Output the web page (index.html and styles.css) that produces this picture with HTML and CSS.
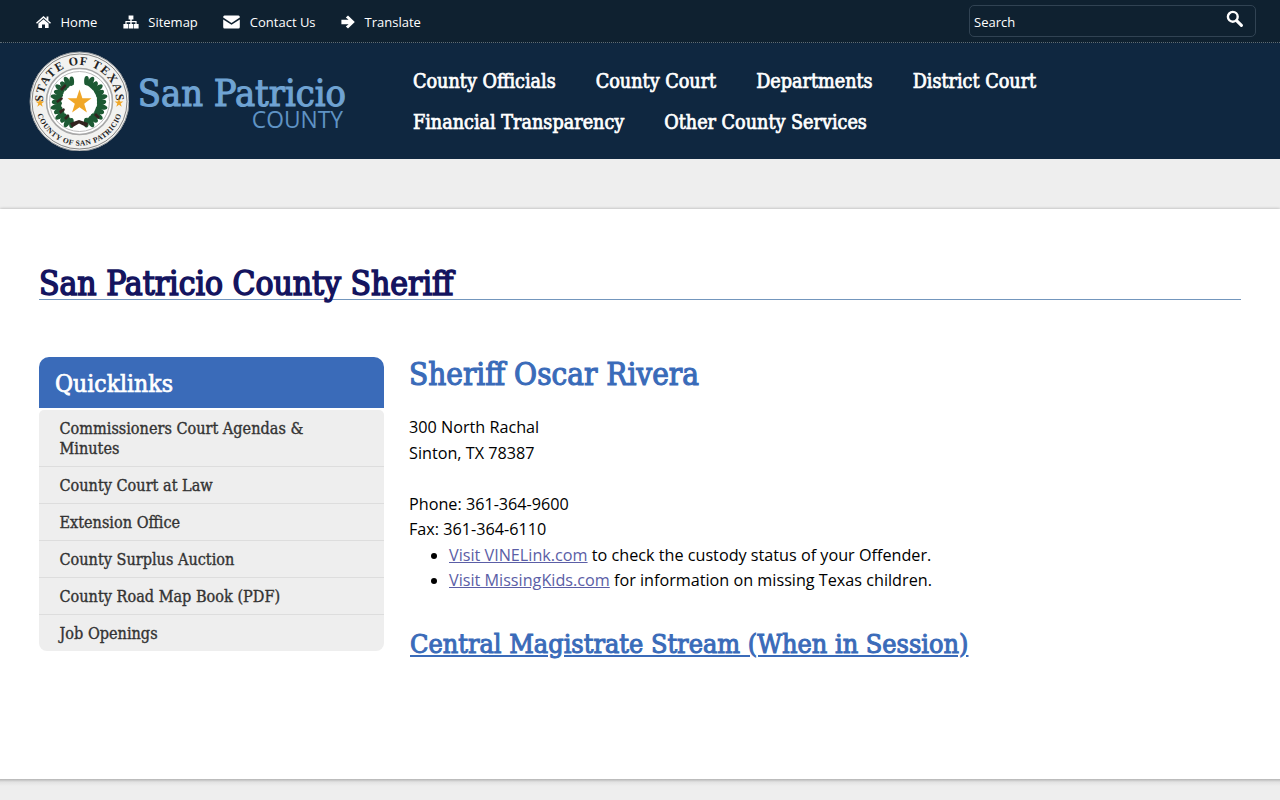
FILE: index.html
```html
<!DOCTYPE html>
<html lang="en">
<head>
  <meta charset="UTF-8">
  <meta name="viewport" content="width=device-width, initial-scale=1.0">
  <title>San Patricio County Sheriff</title>
  <link rel="stylesheet" href="styles.css">
</head>
<body>
  <div class="topbar">
    <ul class="toplinks">
      <li><a href="#">
        <svg class="icon" width="15" height="14" viewBox="0 0 15 14"><path d="M7.5 1 L10.6 3.8 V1.6 H12.4 V5.4 L15 7.8 L14 8.8 L7.5 3 L1 8.8 L0 7.8 Z M2.4 8.6 L7.5 4.2 L12.6 8.6 V13 H9 V9.6 H6 V13 H2.4 Z"/></svg>
        Home</a></li>
      <li><a href="#">
        <svg class="icon" width="16" height="14" viewBox="0 0 16 14"><path d="M5.6 0.5 H10.4 V4.5 H8.7 V6 H13.6 V9 H15.6 V13.5 H10.6 V9 H12.4 V7.2 H8.7 V9 H10 V13.5 H6 V9 H7.3 V7.2 H3.6 V9 H5.4 V13.5 H0.4 V9 H2.4 V6 H7.3 V4.5 H5.6 Z"/></svg>
        Sitemap</a></li>
      <li><a href="#">
        <svg class="icon" width="17" height="14" viewBox="0 0 17 14"><path d="M1.5 0.5 H15.5 Q16.8 0.5 16.8 2 V2.6 L8.5 8 L0.2 2.6 V2 Q0.2 0.5 1.5 0.5 Z M0.2 4.4 L8.5 9.8 L16.8 4.4 V12 Q16.8 13.5 15.5 13.5 H1.5 Q0.2 13.5 0.2 12 Z"/></svg>
        Contact Us</a></li>
      <li><a href="#">
        <svg class="icon" width="14" height="14" viewBox="0 0 14 14"><path d="M7 0.4 L13.8 7 L7 13.6 L4.8 11.6 L7.6 9.2 H0.4 V4.8 H7.6 L4.8 2.4 Z"/></svg>
        Translate</a></li>
    </ul>
    <div class="searchbox">
      <span>Search</span>
      <svg class="icon" width="17" height="17" viewBox="0 0 17 17"><circle cx="6.8" cy="6.8" r="4.9" fill="none" stroke="#fff" stroke-width="2.4"/><path d="M10.6 10.6 L15.4 15.4" stroke="#fff" stroke-width="3" stroke-linecap="round"/></svg>
    </div>
  </div>

  <header class="masthead">
    <a class="brand" href="#">
      <svg class="seal" width="100" height="100" viewBox="0 0 100 100">
        <defs>
          <path id="arc-top" d="M17.4 65.9 A36.5 36.5 0 1 1 83.6 65.9"/>
          <path id="arc-bottom" d="M9.15 35.5 A44 44 0 1 0 91.85 35.5"/>
          <g id="leaf-pair">
            <ellipse cx="46" cy="29" rx="2.4" ry="5" transform="rotate(-28 46 29)"/>
            <ellipse cx="54" cy="29.5" rx="2.4" ry="5" transform="rotate(28 54 29.5)"/>
            <ellipse cx="50" cy="27.5" rx="2.6" ry="5.5"/>
          </g>
        </defs>
        <circle cx="50.5" cy="50.5" r="49.5" fill="#f2f2f0" stroke="#8d9296"/>
        <circle cx="50.5" cy="50.5" r="47.5" fill="none" stroke="#3a3a3a" stroke-width="0.6"/>
        <circle cx="50.5" cy="50.5" r="33" fill="#fff" stroke="#a8a8a8" stroke-width="1.6"/>
        <circle cx="50.5" cy="50.5" r="30" fill="#fff" stroke="#bbb"/>
        <text class="seal-top"><textPath href="#arc-top" startOffset="50%" text-anchor="middle">STATE OF TEXAS</textPath></text>
        <text class="seal-bottom"><textPath href="#arc-bottom" startOffset="50%" text-anchor="middle">COUNTY OF SAN PATRICIO</textPath></text>
        <path class="seal-star" d="M11 47 L12 50.4 L15.4 50.4 L12.7 52.4 L13.7 55.8 L11 53.8 L8.3 55.8 L9.3 52.4 L6.6 50.4 L10 50.4 Z"/>
        <path class="seal-star" d="M90 47 L91 50.4 L94.4 50.4 L91.7 52.4 L92.7 55.8 L90 53.8 L87.3 55.8 L88.3 52.4 L85.6 50.4 L89 50.4 Z"/>
        <g class="seal-leaf">
          <use href="#leaf-pair" transform="rotate(30 50 51)"/>
          <use href="#leaf-pair" transform="rotate(54 50 51)"/>
          <use href="#leaf-pair" transform="rotate(78 50 51)"/>
          <use href="#leaf-pair" transform="rotate(102 50 51)"/>
          <use href="#leaf-pair" transform="rotate(126 50 51)"/>
          <use href="#leaf-pair" transform="rotate(150 50 51)"/>
          <use href="#leaf-pair" transform="rotate(-30 50 51)"/>
          <use href="#leaf-pair" transform="rotate(-54 50 51)"/>
          <use href="#leaf-pair" transform="rotate(-78 50 51)"/>
          <use href="#leaf-pair" transform="rotate(-102 50 51)"/>
          <use href="#leaf-pair" transform="rotate(-126 50 51)"/>
          <use href="#leaf-pair" transform="rotate(-150 50 51)"/>
        </g>
        <circle cx="50.5" cy="50.5" r="17.5" fill="#fff"/>
        <path class="seal-dark" d="M31 38 L36 33 L37.5 35 L33 40 Z M27 50 L33 46 L34 48 L28.5 52 Z M30 60 L35 57 L36 59 L31.5 63 Z M35 67 L39 63 L40.5 65 L37 69 Z M41 72 L50 69 L59 72 L57.5 76 L50 72.5 L43 76.5 Z M67 62 L71 66 L69 68 L65 64 Z"/>
        <path class="seal-star" d="M50.5 38.5 L53.4 47.2 L62.5 47.3 L55.2 52.7 L57.9 61.5 L50.5 56.2 L43.1 61.5 L45.8 52.7 L38.5 47.3 L47.6 47.2 Z"/>
      </svg>
      <span class="brand-text">
        <span class="brand-name">San Patricio</span>
        <span class="brand-sub">COUNTY</span>
      </span>
    </a>
    <nav class="mainnav">
      <a href="#">County Officials</a>
      <a href="#">County Court</a>
      <a href="#">Departments</a>
      <a href="#">District Court</a>
      <a href="#">Financial Transparency</a>
      <a href="#">Other County Services</a>
    </nav>
  </header>

  <div class="strip"></div>

  <main class="page">
    <h1 class="page-title"><span>San Patricio County Sheriff</span></h1>
    <div class="columns">
      <aside class="quicklinks">
        <h2>Quicklinks</h2>
        <ul>
          <li><a href="#">Commissioners Court Agendas &amp; Minutes</a></li>
          <li><a href="#">County Court at Law</a></li>
          <li><a href="#">Extension Office</a></li>
          <li><a href="#">County Surplus Auction</a></li>
          <li><a href="#">County Road Map Book (PDF)</a></li>
          <li><a href="#">Job Openings</a></li>
        </ul>
      </aside>
      <section class="content">
        <h2>Sheriff Oscar Rivera</h2>
        <p class="address">300 North Rachal<br>Sinton, TX 78387</p>
        <p class="phones">Phone: 361-364-9600<br>Fax: 361-364-6110</p>
        <ul>
          <li><a href="#">Visit VINELink.com</a> to check the custody status of your Offender.</li>
          <li><a href="#">Visit MissingKids.com</a> for information on missing Texas children.</li>
        </ul>
        <h3><a href="#">Central Magistrate Stream (When in Session)</a></h3>
      </section>
    </div>
  </main>
  <div class="pagefoot"></div>
</body>
</html>
```

FILE: styles.css
```css
body {
  margin: 0;
  background-color: #eee;
  font-family: "Open Sans", "Noto Sans", sans-serif;
  color: #000;
}

/* slab headings: DejaVu has no bold condensed, so the regular cut gets a stroke */
.brand-name,
.mainnav a,
.page-title,
.quicklinks h2,
.quicklinks li,
.content h2,
.content h3 {
  font-family: "DejaVu Serif", serif;
  font-stretch: condensed;
  font-weight: normal;
}

/* top bar */
.topbar {
  height: 42px;
  display: flex;
  justify-content: space-between;
  align-items: center;
  padding: 0 24px 0 36px;
  background-color: #0f2130;
  border-bottom: 1px dotted #5d6b75;
}
.toplinks {
  display: flex;
  gap: 25.5px;
  margin: 1px 0 0;
  padding: 0;
  list-style: none;
}
.toplinks a {
  display: flex;
  align-items: center;
  gap: 9.5px;
  color: #fff;
  font-size: 13px;
  text-decoration: none;
}
.icon {
  fill: #fff;
  flex: none;
}
.searchbox {
  width: 287px;
  height: 32px;
  display: flex;
  justify-content: space-between;
  padding: 0 12px 0 4px;
  box-sizing: border-box;
  align-items: center;
  border: 1px solid #314353;
  border-radius: 5px;
  color: #fff;
  font-size: 13px;
}
.searchbox span {
  margin-top: 2px;
}
.searchbox .icon {
  margin-top: -6px;
}

/* header */
.masthead {
  height: 116px;
  display: flex;
  background-color: #0f2740;
}
.brand {
  width: 413px;
  flex: none;
  display: flex;
  align-items: center;
  gap: 9px;
  padding-left: 29px;
  box-sizing: border-box;
  text-decoration: none;
}
.seal {
  flex: none;
}
.seal-top {
  font: bold 12px "Liberation Serif", serif;
  letter-spacing: 1.1px;
  fill: #222;
}
.seal-bottom {
  font: bold 7.6px "Liberation Serif", serif;
  letter-spacing: 0.5px;
  fill: #222;
}
.seal-star {
  fill: #f0a728;
}
.seal-leaf {
  fill: #1d5a34;
}
.seal-dark {
  fill: #33231f;
}
.brand-text {
  display: flex;
  flex-direction: column;
  align-items: flex-end;
  width: 208px;
  color: #6fa3d3;
}
.brand-name {
  font-size: 37.7px;
  line-height: 38px;
  -webkit-text-stroke: 1.1px #6fa3d3;
  white-space: nowrap;
}
.brand-sub {
  font-size: 22.8px;
  line-height: 16px;
  color: #5f93c4;
  margin-right: 3px;
}
.mainnav {
  display: flex;
  flex-wrap: wrap;
  align-content: flex-start;
  gap: 0 40px;
  padding-top: 18px;
  width: 700px;
}
.mainnav a {
  color: #fff;
  font-size: 19.6px;
  line-height: 41px;
  -webkit-text-stroke: 0.7px #fff;
  text-decoration: none;
  white-space: nowrap;
}

.strip {
  height: 50px;
}

/* page body */
.page {
  height: 570px;
  padding: 0 39px;
  box-sizing: border-box;
  background-color: #fff;
  box-shadow: 0 0 3px rgba(0, 0, 0, 0.3);
  overflow: hidden;
}
.pagefoot {
  height: 21px;
  background: linear-gradient(#b4b4b4, #e2e2e2 3px, #eee 7px);
}
.page-title {
  margin: 54px 0 57px;
  height: 36px;
  border-bottom: 1px solid #7396bd;
  color: #14145f;
  font-size: 33.3px;
  line-height: 42px;
  -webkit-text-stroke: 1.5px #14145f;
}
.columns {
  display: flex;
  gap: 25px;
  align-items: flex-start;
}
.quicklinks {
  width: 345px;
  flex: none;
}
.quicklinks h2 {
  height: 51px;
  margin: 0 0 2px;
  padding-left: 16px;
  background-color: #3a6bb9;
  border-radius: 10px 10px 0 0;
  color: #fff;
  font-size: 24.5px;
  line-height: 53px;
  -webkit-text-stroke: 0.7px #fff;
}
.quicklinks ul {
  margin: 0;
  padding: 0;
  list-style: none;
  background-color: #eee;
  border-radius: 5px 5px 8px 8px;
}
.quicklinks li {
  padding: 9px 20px 7px 20.5px;
  border-bottom: 1px solid #ddd;
  font-size: 16.1px;
  line-height: 20px;
  -webkit-text-stroke: 0.35px #333;
}
.quicklinks li:last-child {
  border-bottom: none;
}
.quicklinks a {
  color: #333;
  text-decoration: none;
}
.content {
  flex: 1;
  font-size: 16.2px;
  line-height: 25.5px;
}
.content h2 {
  margin: 0;
  color: #3a6bb9;
  font-size: 31.2px;
  line-height: 34px;
  -webkit-text-stroke: 1.1px #3a6bb9;
}
.content p {
  margin: 0;
}
.address {
  padding-top: 24px;
}
.phones {
  padding-top: 25.5px;
}
.content ul {
  margin: 0;
  padding-left: 40px;
}
.content ul a {
  color: #5b5ea6;
}
.content h3 {
  margin: 33px 0 0 1px;
  font-size: 26.8px;
  line-height: 34px;
  -webkit-text-stroke: 1px #3a6bb9;
}
.content h3 a {
  color: #3a6bb9;
}
```
